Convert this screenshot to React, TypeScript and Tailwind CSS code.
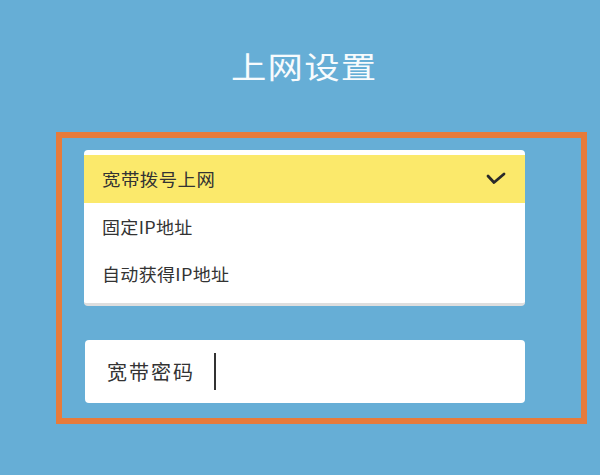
import React from "react";

export default function App() {
  const font = { fontFamily: '"Noto Sans CJK SC", "Noto Sans", sans-serif' };
  return (
    <div
      className="w-[600px] h-[475px] bg-[#66aed6] overflow-hidden flex flex-col"
      style={font}
    >
      <div className="pt-[50px] pl-[231px] text-[30px] leading-[30px] text-[#f7fbfd]">
        <span className="inline-block origin-left scale-x-[1.18] tracking-[1px]">上网设置</span>
      </div>
      <div className="mt-[52px] ml-[56px] w-[531px] h-[292px] border-[6px] border-[#e77b3b] pt-[12px] pl-[22px]">
        <div className="w-[441px] bg-white rounded-[4px] pt-[5px] pb-[6px] border-b-[3px] border-[#dedede] overflow-hidden">
          <div className="h-[48px] bg-[#fbe96b] flex items-center justify-between pl-[18px] pr-[19px]">
            <span className="inline-block origin-left scale-x-[1.08] text-[17px] tracking-[0.5px] text-[#333]">宽带拨号上网</span>
            <svg width="20" height="14" viewBox="0 0 20 14">
              <polyline
                points="2,4 8,10.5 18,2"
                fill="none"
                stroke="#2a2a2a"
                strokeWidth="2.8"
                strokeLinecap="round"
                strokeLinejoin="round"
              />
            </svg>
          </div>
          <div className="h-[47px] flex items-center pl-[18px]">
            <span className="inline-block origin-left scale-x-[1.06] text-[17px] tracking-[0.3px] text-[#333]">固定IP地址</span>
          </div>
          <div className="h-[47px] flex items-center pl-[18px]">
            <span className="inline-block origin-left scale-x-[1.06] text-[17px] tracking-[0.3px] text-[#333]">自动获得IP地址</span>
          </div>
        </div>
        <div className="mt-[34px] ml-[1px] w-[440px] h-[63px] bg-white rounded-[4px] flex items-center pl-[22px]">
          <span className="text-[20px] tracking-[2px] text-[#333]">宽带密码</span>
          <div className="ml-[19px] w-[2px] h-[37px] bg-[#333]" />
        </div>
      </div>
    </div>
  );
}
